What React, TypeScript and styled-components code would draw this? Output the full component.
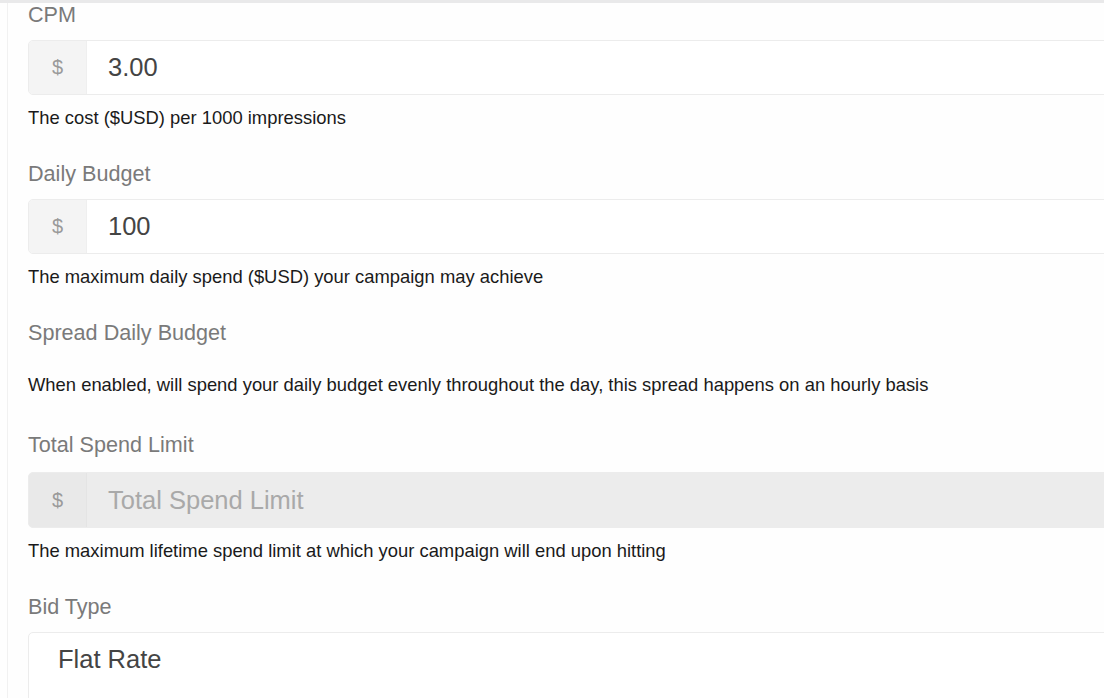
import React from "react";
import styled, { createGlobalStyle } from "styled-components";

const Global = createGlobalStyle`
  html, body { margin: 0; padding: 0; background: #fefefe; overflow: hidden; }
  body { font-family: "Liberation Sans", Arial, Helvetica, sans-serif; }
  * { box-sizing: border-box; }
`;

const Page = styled.div`
  width: 1104px;
  height: 698px;
  overflow: hidden;
  border-top: 3px solid #e9e9ea;
  background: #fefefe;
`;

const Panel = styled.div`
  margin-left: 7px;
  width: 1160px;
  min-height: 720px;
  border-left: 1px solid #f1f1f1;
  padding: 0 0 0 20px;
`;

const Field = styled.div<{ $after?: number }>`
  display: flex;
  flex-direction: column;
  margin-bottom: ${(p) => p.$after ?? 34}px;
`;

const Label = styled.div<{ $gap?: number }>`
  font-size: 21.6px;
  line-height: 24px;
  color: #7a7a7a;
  margin-bottom: ${(p) => p.$gap ?? 13}px;
`;

const Group = styled.div<{ $disabled?: boolean; $h?: number }>`
  display: flex;
  height: ${(p) => p.$h ?? 55}px;
  border: 1px solid #ececec;
  border-radius: 5px;
  background: ${(p) => (p.$disabled ? "#ececec" : "#ffffff")};
  overflow: hidden;
`;

const Addon = styled.div<{ $disabled?: boolean }>`
  width: 58px;
  flex: none;
  display: flex;
  align-items: center;
  justify-content: center;
  background: ${(p) => (p.$disabled ? "#e9e9e9" : "#f4f4f4")};
  border-right: 1px solid ${(p) => (p.$disabled ? "#e4e4e4" : "#efefef")};
  color: #9a9a9a;
  font-size: 20px;
`;

const Value = styled.div<{ $placeholder?: boolean }>`
  flex: 1;
  display: flex;
  align-items: center;
  padding-left: 21px;
  font-size: 25.5px;
  color: ${(p) => (p.$placeholder ? "#a9a9a9" : "#444")};
`;

const Help = styled.div<{ $gap?: number }>`
  font-size: 18.4px;
  line-height: 20px;
  color: #1a1a1a;
  margin-top: ${(p) => p.$gap ?? 13}px;
`;

const Select = styled.div`
  height: 80px;
  border: 1px solid #ececec;
  border-radius: 5px;
  background: #fff;
  padding: 12px 0 0 29px;
  font-size: 25.5px;
  color: #444;
`;

type F = {
  label: string;
  value?: string;
  placeholder?: string;
  help: string;
  disabled?: boolean;
  labelGap?: number;
  height?: number;
};

const fields: F[] = [
  { label: "CPM", value: "3.00", help: "The cost ($USD) per 1000 impressions" },
  {
    label: "Daily Budget",
    value: "100",
    help: "The maximum daily spend ($USD) your campaign may achieve",
  },
];

function MoneyField({ f }: { f: F }) {
  return (
    <Field>
      <Label $gap={f.labelGap}>{f.label}</Label>
      <Group $disabled={f.disabled} $h={f.height}>
        <Addon $disabled={f.disabled}>$</Addon>
        <Value $placeholder={!f.value}>{f.value ?? f.placeholder}</Value>
      </Group>
      <Help>{f.help}</Help>
    </Field>
  );
}

export default function App() {
  return (
    <>
      <Global />
      <Page>
        <Panel>
          {fields.map((f) => (
            <MoneyField key={f.label} f={f} />
          ))}
          <Field $after={38}>
            <Label>Spread Daily Budget</Label>
            <Help $gap={17}>
              When enabled, will spend your daily budget evenly throughout the day, this spread happens on an hourly basis
            </Help>
          </Field>
          <MoneyField
            f={{
              label: "Total Spend Limit",
              placeholder: "Total Spend Limit",
              disabled: true,
              labelGap: 15,
              height: 56,
              help: "The maximum lifetime spend limit at which your campaign will end upon hitting",
            }}
          />
          <Field>
            <Label>Bid Type</Label>
            <Select>Flat Rate</Select>
          </Field>
        </Panel>
      </Page>
    </>
  );
}
